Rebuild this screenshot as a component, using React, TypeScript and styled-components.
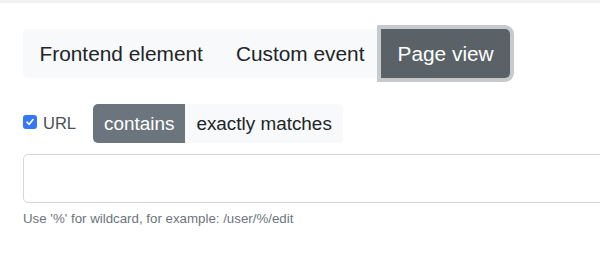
import React, { useState } from 'react';
import styled, { createGlobalStyle, css } from 'styled-components';

const GlobalStyle = createGlobalStyle`
  html, body {
    margin: 0;
    padding: 0;
    background: #fff;
    overflow: hidden;
  }
  body {
    font-family: "Liberation Sans", Arial, Helvetica, sans-serif;
    color: #212529;
  }
`;

const TopStrip = styled.div`
  height: 3px;
  background: #f2f2f2;
`;

const Page = styled.div`
  padding: 26px 0 8px 23px;
  overflow: hidden;
`;

const TabGroup = styled.div`
  display: inline-flex;
  background: #f8f9fa;
  border-radius: 5px;
  height: 49px;
  margin-left: 0;
`;

const Tab = styled.button<{ $active?: boolean }>`
  border: none;
  background: transparent;
  font-family: inherit;
  font-size: 20.85px;
  color: #212529;
  padding: 0 16.5px;
  height: 49px;
  cursor: pointer;
  border-radius: 0;

  &:first-child {
    border-radius: 5px 0 0 5px;
  }
  &:last-child {
    border-radius: 0 5px 5px 0;
  }

  ${p => p.$active && css`
    background: #5a6268;
    color: #fff;
    box-shadow: 0 0 0 4px #c7cacd;
  `}
`;

const TabWrap = styled.div`
  padding: 4px 0;
  margin-top: -4px;
`;

const MatchRow = styled.div`
  display: flex;
  align-items: center;
  margin-top: 22px;
  height: 39px;
`;

const CheckLabel = styled.label`
  display: flex;
  align-items: center;
  gap: 6px;
  font-size: 16.5px;
  color: #495057;
  margin-right: 17px;
`;

const CheckBox = styled.span`
  width: 14px;
  height: 14px;
  border-radius: 3px;
  background: #3478f6;
  display: flex;
  align-items: center;
  justify-content: center;
  margin-top: -3px;
`;

const SegGroup = styled.div`
  display: inline-flex;
  background: #f8f9fa;
  border-radius: 5px;
  height: 39px;
`;

const Seg = styled.button<{ $active?: boolean }>`
  border: none;
  background: transparent;
  font-family: inherit;
  font-size: 18.9px;
  color: #212529;
  padding: 0 11px;
  height: 39px;
  cursor: pointer;

  &:first-child {
    border-radius: 5px 0 0 5px;
  }
  &:last-child {
    border-radius: 0 5px 5px 0;
  }

  ${p => p.$active && css`
    background: #6c757d;
    color: #fff;
  `}
`;

const UrlInput = styled.input`
  display: block;
  margin-top: 11px;
  width: 620px;
  height: 49px;
  box-sizing: border-box;
  border: 1px solid #d3d7db;
  border-radius: 5px;
  font-family: inherit;
  font-size: 18px;
  padding: 0 14px;
  outline: none;
`;

const Hint = styled.div`
  margin-top: 6px;
  font-size: 13.3px;
  line-height: 20px;
  color: #6c757d;
`;

const tabs = ['Frontend element', 'Custom event', 'Page view'];

export default function App() {
  const [tab, setTab] = useState('Page view');
  const [mode, setMode] = useState('contains');

  return (
    <>
      <GlobalStyle />
      <TopStrip />
      <Page>
        <TabWrap>
          <TabGroup>
            {tabs.map(t => (
              <Tab key={t} $active={t === tab} onClick={() => setTab(t)}>
                {t}
              </Tab>
            ))}
          </TabGroup>
        </TabWrap>
        <MatchRow>
          <CheckLabel>
            <CheckBox>
              <svg width="10" height="10" viewBox="0 0 10 10">
                <path d="M2 5.2 L4.2 7.3 L8 2.6" fill="none" stroke="#fff" strokeWidth="1.6" strokeLinecap="round" strokeLinejoin="round" />
              </svg>
            </CheckBox>
            URL
          </CheckLabel>
          <SegGroup>
            <Seg $active={mode === 'contains'} onClick={() => setMode('contains')}>contains</Seg>
            <Seg $active={mode === 'exact'} onClick={() => setMode('exact')}>exactly matches</Seg>
          </SegGroup>
        </MatchRow>
        <UrlInput type="text" />
        <Hint>Use '%' for wildcard, for example: /user/%/edit</Hint>
      </Page>
    </>
  );
}
